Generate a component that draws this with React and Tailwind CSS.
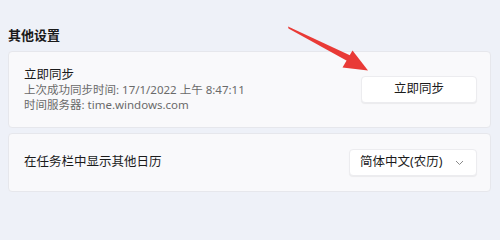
import React from "react";

const Arrow = () => (
  <svg
    className="absolute left-0 top-0 pointer-events-none"
    width="500"
    height="207"
    viewBox="0 0 500 207"
  >
    {/* cola fina que se ensancha hacia la punta */}
    <polygon points="288,26.5 288.5,28.5 350,62.5 352.5,56.5" fill="#e93a36" />
    <polygon points="368,70.5 342.5,67.5 352.5,50.5" fill="#e93a36" />
  </svg>
);

export default function App() {
  return (
    <div
      className="relative w-[500px] h-[207px] min-h-screen bg-[#eef1f8] overflow-hidden"
      style={{ fontFamily: '"Noto Sans", "Noto Sans CJK SC", sans-serif' }}
    >
      <div className="pt-[27px] px-2">
        <div className="text-[13px] font-bold text-[#1a1a1a] leading-[16px]">其他设置</div>

        {/* Sincronizar ahora */}
        <div className="mt-[8px] w-[483px] h-[77px] flex items-center justify-between pl-[15px] pr-[13px] bg-[#f9f9fb] border border-[#e6e7ec] rounded-[4px]">
          <div className="flex flex-col">
            <span className="text-[12.5px] leading-[15px] text-[#1b1b1b]">立即同步</span>
            <span className="text-[11.5px] leading-[15px] text-[#6a6a6a]">
              上次成功同步时间: 17/1/2022 上午 8:47:11
            </span>
            <span className="text-[11.5px] leading-[15px] text-[#6a6a6a]">
              时间服务器: time.windows.com
            </span>
          </div>
          <button className="w-[116px] h-[27px] bg-white rounded-[4px] border border-[#ececef] shadow-[0_1px_1px_rgba(0,0,0,0.06)] text-[12.5px] text-[#1b1b1b]">
            立即同步
          </button>
        </div>

        {/* Calendario */}
        <div className="mt-[5px] w-[483px] h-[59px] flex items-center justify-between pl-[15px] pr-[13px] bg-[#f9f9fb] border border-[#e6e7ec] rounded-[4px]">
          <span className="text-[12.5px] text-[#1b1b1b]">在任务栏中显示其他日历</span>
          <div className="w-[128px] h-[27px] flex items-center justify-between pl-[10px] pr-[12px] bg-white rounded-[4px] border border-[#ececef] shadow-[0_1px_1px_rgba(0,0,0,0.06)]">
            <span className="text-[12.5px] text-[#1b1b1b]">简体中文(农历)</span>
            <svg width="9" height="6" viewBox="0 0 9 6">
              <path d="M1 1 L4.5 4.5 L8 1" fill="none" stroke="#8a8a8a" strokeWidth="1" />
            </svg>
          </div>
        </div>
      </div>
      <Arrow />
    </div>
  );
}
